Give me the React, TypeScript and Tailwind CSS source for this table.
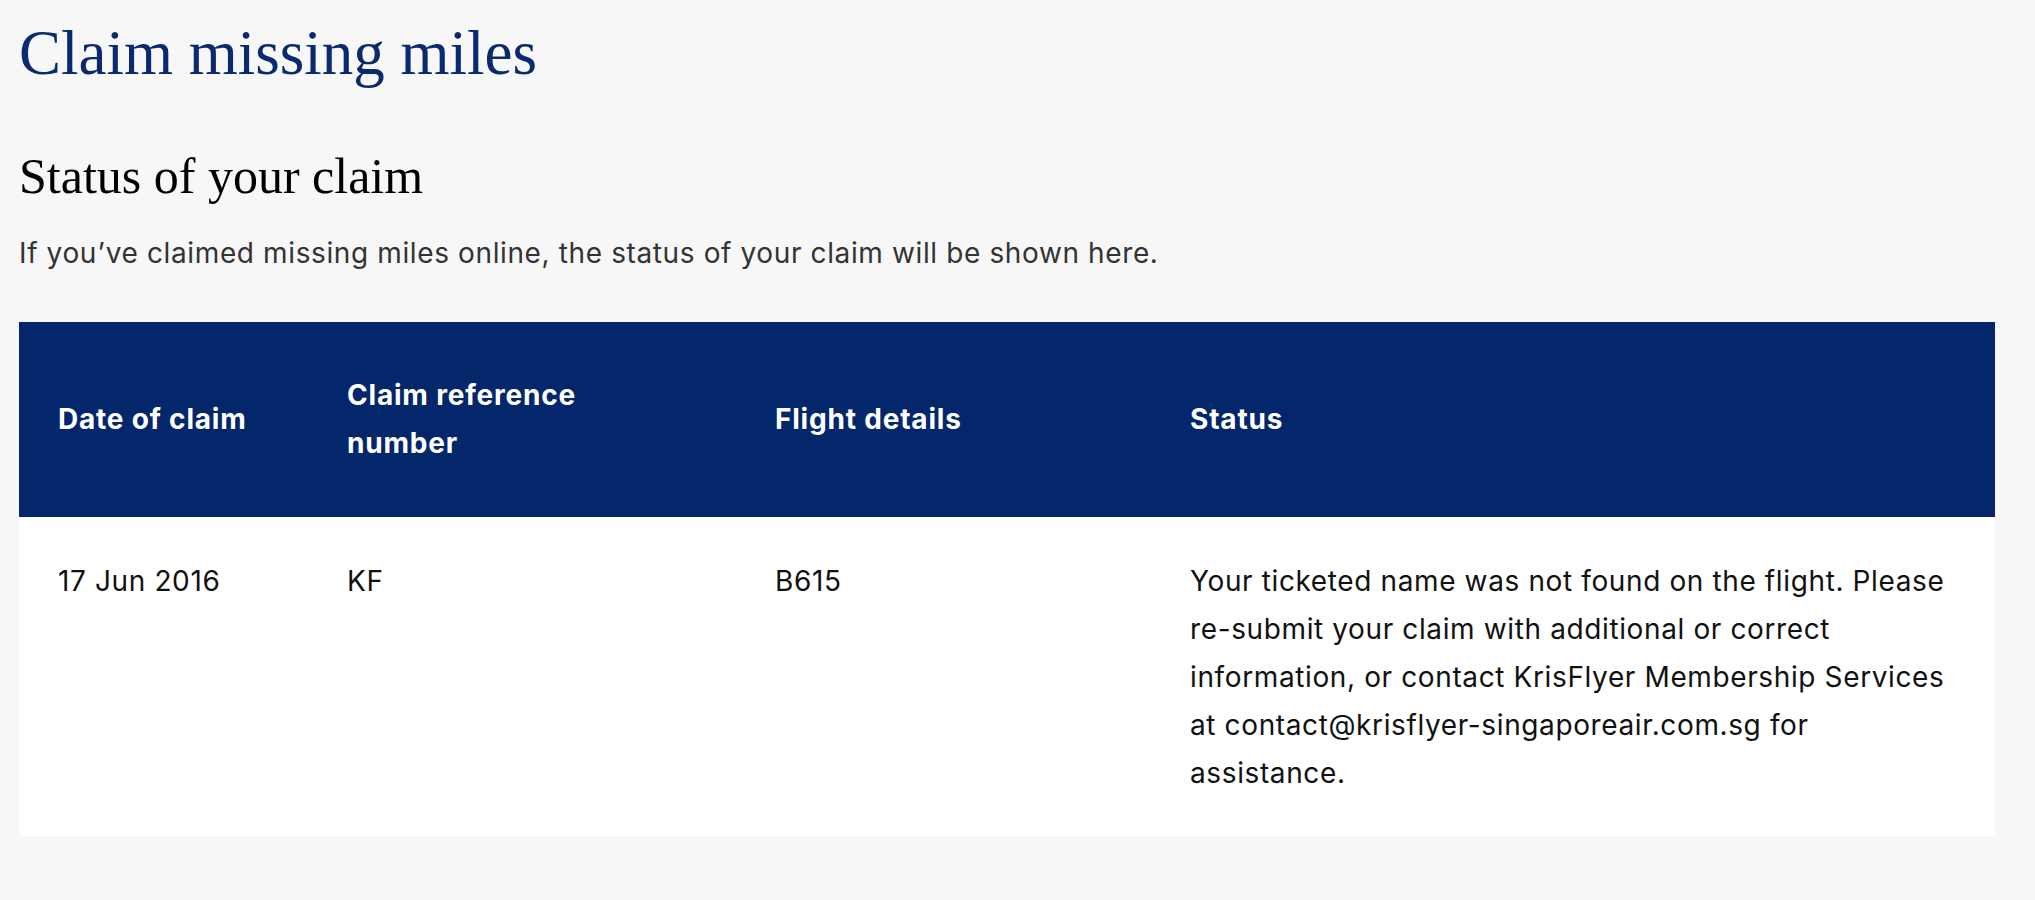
import React from 'react';

const sans = 'font-["Inter","Open_Sans",sans-serif]';

const headers = ['Date of claim', 'Claim reference number', 'Flight details', 'Status'];

export default function App() {
  return (
    <div className="min-h-[900px] bg-[#f7f7f7] pl-[19px] pr-[40px] pt-[21px]">
      <h1 className="font-['Liberation_Serif',serif] text-[63px] leading-[64px] text-[#0a2a6e]">
        Claim missing miles
      </h1>

      <h2 className="mt-[66px] font-['Liberation_Serif',serif] text-[50px] leading-[50px] text-black">
        Status of your claim
      </h2>

      <p className={`${sans} mt-[38px] text-[28px] leading-[28px] tracking-[0.62px] text-[#333]`}>
        If you’ve claimed missing miles online, the status of your claim will be shown here.
      </p>

      <div className={`${sans} mt-[55px] w-[1976px] tracking-[0.62px]`}>
        {/* header row */}
        <div className="grid grid-cols-[289px_428px_415px_1fr] bg-[#04266b] text-white">
          {headers.map((h) => (
            <div
              key={h}
              className="flex items-center pb-[50px] pl-[39px] pr-[38px] pt-[49px] text-[28px] font-bold leading-[48px] tracking-[0.8px]"
            >
              <span className={h === 'Claim reference number' ? 'max-w-[240px]' : ''}>{h}</span>
            </div>
          ))}
        </div>

        {/* body row */}
        <div className="grid grid-cols-[289px_428px_415px_1fr] bg-white pb-[39px] pt-[40px] text-[28px] leading-[48px] text-[#111]">
          <div className="pl-[39px]">17 Jun 2016</div>
          <div className="pl-[39px]">KF</div>
          <div className="pl-[39px]">B615</div>
          <div className="whitespace-nowrap pl-[39px]">
            Your ticketed name was not found on the flight. Please
            <br />
            re-submit your claim with additional or correct
            <br />
            information, or contact KrisFlyer Membership Services
            <br />
            at contact@krisflyer-singaporeair.com.sg for
            <br />
            assistance.
          </div>
        </div>
      </div>
    </div>
  );
}
